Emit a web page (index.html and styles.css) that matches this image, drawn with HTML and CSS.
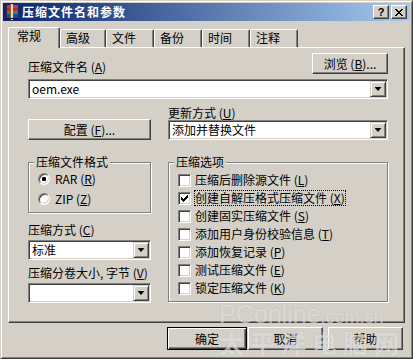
FILE: index.html
```html
<!DOCTYPE html>
<html lang="zh-CN">

<head>
    <meta charset="utf-8">
    <title>压缩文件名和参数</title>
    <link rel="stylesheet" href="styles.css">
</head>

<body>

    <div class="dialog">
        <!-- caption -->
        <div class="titlebar">
            <svg class="app-icon" viewBox="0 0 16 16" shape-rendering="crispEdges">
                <rect x="1" y="1" width="13" height="3" fill="#9c3c9c"/>
                <rect x="1" y="4" width="13" height="3" fill="#d42020"/>
                <rect x="1" y="7" width="13" height="3" fill="#209c3c"/>
                <rect x="1" y="10" width="13" height="4" fill="#2040c8"/>
                <rect x="1" y="1" width="2" height="13" fill="#402040"/>
                <rect x="6" y="0" width="3" height="16" fill="#e8d8a0"/>
                <rect x="6" y="0" width="1" height="16" fill="#806030"/>
                <rect x="1" y="14" width="13" height="1" fill="#101030"/>
            </svg>
            <span class="title">压缩文件名和参数</span>
            <button class="cap-btn">?</button>
            <button class="cap-btn">
                <svg width="8" height="7" viewBox="0 0 8 7" shape-rendering="crispEdges">
                    <path d="M0 0h2v1h1v1h2v-1h1v-1h2v1h-1v1h-1v1h-1v1h1v1h1v1h1v1h-2v-1h-1v-1h-2v1h-1v1h-2v-1h1v-1h1v-1h1v-1h-1v-1h-1v-1h-1z" fill="#000"/>
                </svg>
            </button>
        </div>

        <!-- tabs -->
        <div class="tabs">
            <div class="tab active">常规</div>
            <div class="tab">高级</div>
            <div class="tab">文件</div>
            <div class="tab">备份</div>
            <div class="tab">时间</div>
            <div class="tab">注释</div>
        </div>

        <div class="panel">
            <div class="name-row">
                <label>压缩文件名 (<u>A</u>)</label>
                <button class="btn browse">浏览 (<u>B</u>)...</button>
            </div>
            <div class="combo name-combo">
                <span class="value">oem.exe</span>
                <span class="drop"></span>
            </div>

            <div class="columns">
                <button class="btn profile">配置 (<u>F</u>)...</button>

                <div class="update">
                    <label>更新方式 (<u>U</u>)</label>
                    <div class="combo">
                        <span class="value">添加并替换文件</span>
                        <span class="drop"></span>
                    </div>
                </div>

                <div class="left-col">
                    <fieldset class="group format">
                        <legend>压缩文件格式</legend>
                        <div class="radio"><span class="radio-mark checked"></span>RAR (<u>R</u>)</div>
                        <div class="radio"><span class="radio-mark"></span>ZIP (<u>Z</u>)</div>
                    </fieldset>

                    <label class="field-label">压缩方式 (<u>C</u>)</label>
                    <div class="combo">
                        <span class="value">标准</span>
                        <span class="drop"></span>
                    </div>

                    <label class="field-label volume">压缩分卷大小, 字节 (<u>V</u>)</label>
                    <div class="combo">
                        <span class="value"></span>
                        <span class="drop"></span>
                    </div>
                </div>

                <fieldset class="group options">
                    <legend>压缩选项</legend>
                    <div class="check"><span class="box"></span><span class="text">压缩后删除源文件 (<u>L</u>)</span></div>
                    <div class="check"><span class="box checked"><svg width="13" height="13" viewBox="0 0 13 13" shape-rendering="crispEdges"><path d="M3 5H4V6H5V7H6V6H7V5H8V4H9V3H10V6H9V7H8V8H7V9H6V10H5V9H4V8H3Z" fill="#000"/></svg></span><span class="text focus">创建自解压格式压缩文件 (<u>X</u>)</span></div>
                    <div class="check"><span class="box"></span><span class="text">创建固实压缩文件 (<u>S</u>)</span></div>
                    <div class="check"><span class="box"></span><span class="text">添加用户身份校验信息 (<u>T</u>)</span></div>
                    <div class="check"><span class="box"></span><span class="text">添加恢复记录 (<u>P</u>)</span></div>
                    <div class="check"><span class="box"></span><span class="text">测试压缩文件 (<u>E</u>)</span></div>
                    <div class="check"><span class="box"></span><span class="text">锁定压缩文件 (<u>K</u>)</span></div>
                </fieldset>
            </div>
        </div>

        <div class="actions">
            <button class="btn default">确定</button>
            <button class="btn">取消</button>
            <button class="btn">帮助</button>
        </div>

        <!-- site watermark over the picture -->
        <div class="watermark">
            <div class="wm-en">PConline<small>.com.cn</small></div>
            <div class="wm-cn">太平洋电脑网</div>
        </div>
    </div>

</body>

</html>
```

FILE: styles.css
```css
* {
    margin: 0;
    padding: 0;
    box-sizing: border-box;
}

body {
    width: 413px;
    height: 359px;
    overflow: hidden;
    background: #d4d0c8;
    font-family: "Noto Sans CJK SC", "Noto Sans", sans-serif;
    font-size: 12px;
    line-height: 14px;
    color: #000;
}

u {
    text-underline-offset: 1px;
}

/** Window frame **/
.dialog {
    position: relative;
    width: 413px;
    height: 359px;
    padding: 2px;
    background: #d4d0c8;
    border: 1px solid;
    border-color: #d4d0c8 #404040 #404040 #d4d0c8;
    box-shadow: inset 1px 1px #fff, inset -1px -1px #808080;
}

.titlebar {
    display: flex;
    align-items: center;
    height: 18px;
    padding: 0 3px 0 1px;
    background: linear-gradient(to right, #0a246a, #a6caf0);
    color: #fff;
}

.app-icon {
    flex: none;
    width: 16px;
    height: 16px;
    margin-right: 2px;
}

.title {
    flex: 1;
    font-weight: 700;
    letter-spacing: 1px;
}

.cap-btn {
    display: flex;
    align-items: center;
    justify-content: center;
    width: 16px;
    height: 14px;
    background: #d4d0c8;
    border: 1px solid;
    border-color: #fff #404040 #404040 #fff;
    box-shadow: inset -1px -1px #808080;
    font-family: "Liberation Sans", sans-serif;
    font-size: 11px;
    font-weight: 700;
    line-height: 12px;
    color: #000;
}

.cap-btn + .cap-btn {
    margin-left: 2px;
}

/** Tab strip **/
.tabs {
    display: flex;
    align-items: flex-end;
    height: 20px;
    margin-top: 6px;
    padding-left: 5px;
}

.tab {
    width: 48px;
    height: 18px;
    padding: 1px 0 0 5px;
    border-style: solid;
    border-width: 1px 1px 0 1px;
    border-color: #fff #404040 #404040 #fff;
    border-radius: 2px 2px 0 0;
    box-shadow: inset -1px 0 #808080;
}

.tab.active {
    position: relative;
    z-index: 1;
    width: 52px;
    height: 21px;
    margin-bottom: -1px;
    padding-left: 8px;
    background: #d4d0c8;
}

.tab.active + .tab {
    width: 46px;
}

.panel {
    height: 276px;
    margin: 0 5px;
    padding: 5px 16px 0 19px;
    border: 1px solid;
    border-color: #fff #404040 #404040 #fff;
    box-shadow: inset -1px -1px #808080;
}

/** Controls **/
.btn {
    font: inherit;
    color: #000;
    background: #d4d0c8;
    border: 1px solid;
    border-color: #fff #404040 #404040 #fff;
    box-shadow: inset -1px -1px #808080;
}

.name-row {
    display: flex;
    justify-content: space-between;
    align-items: flex-end;
}

.browse {
    width: 76px;
    height: 21px;
}

.combo {
    display: flex;
    height: 20px;
    padding: 1px;
    background: #fff;
    border: 1px solid;
    border-color: #808080 #fff #fff #808080;
    box-shadow: inset 1px 1px #404040, inset -1px -1px #d4d0c8;
}

.combo .value {
    flex: 1;
    padding-left: 2px;
    line-height: 16px;
    white-space: nowrap;
}

.name-combo {
    margin-top: 5px;
}

.drop {
    display: flex;
    align-items: center;
    justify-content: center;
    width: 16px;
    height: 16px;
    background: #d4d0c8;
    border: 1px solid;
    border-color: #d4d0c8 #404040 #404040 #d4d0c8;
    box-shadow: inset 1px 1px #fff, inset -1px -1px #808080;
}

.drop::after {
    content: "";
    width: 7px;
    height: 4px;
    background: #000;
    clip-path: polygon(0 0, 100% 0, 50% 100%);
}

.columns {
    display: grid;
    grid-template-columns: 123px 220px;
    column-gap: 17px;
    align-items: start;
}

.profile {
    height: 21px;
    margin-top: 20px;
}

.update {
    display: flex;
    flex-direction: column;
    margin-top: 7px;
}

.left-col {
    display: flex;
    flex-direction: column;
}

.field-label {
    margin-top: 10px;
    margin-bottom: 3px;
}

.field-label.volume {
    margin-top: 6px;
}

/** Group boxes **/
.group {
    margin-top: 15px;
    padding: 0 6px 3px 9px;
    border: 1px solid #808080;
    box-shadow: 1px 1px #fff, inset 1px 1px #fff;
}

.group legend {
    margin-left: -4px;
    padding: 0 2px;
    background: #d4d0c8;
}

.options {
    padding-top: 2px;
    padding-bottom: 4px;
}

.radio {
    display: flex;
    align-items: center;
    height: 20px;
}

.radio-mark {
    position: relative;
    width: 12px;
    height: 12px;
    margin-right: 5px;
    background: #fff;
    border-radius: 50%;
    border: 1px solid;
    border-color: #808080 #fff #fff #808080;
    box-shadow: inset 1px 1px #404040, inset -1px -1px #d4d0c8;
}

.radio-mark.checked::after {
    content: "";
    position: absolute;
    left: 3px;
    top: 3px;
    width: 4px;
    height: 4px;
    border-radius: 1px;
    background: #000;
}

.check {
    display: flex;
    align-items: center;
    height: 18px;
}

.check .box {
    flex: none;
    width: 13px;
    height: 13px;
    margin-right: 3px;
    background: #fff;
    border: 1px solid;
    border-color: #808080 #fff #fff #808080;
    box-shadow: inset 1px 1px #404040, inset -1px -1px #d4d0c8;
}

.check .box svg {
    display: block;
    margin: -1px;
}

.check .text {
    padding: 1px;
    white-space: nowrap;
}

.check .text.focus {
    outline: 1px dotted #000;
    outline-offset: -1px;
}

/** Dialog buttons **/
.actions {
    display: flex;
    justify-content: flex-end;
    margin-top: 4px;
    padding-right: 7px;
}

.actions .btn {
    width: 75px;
    height: 23px;
    margin-left: 5px;
}

.actions .btn.default {
    width: 80px;
    border-color: #000;
    box-shadow: inset 1px 1px #fff, inset -1px -1px #404040, inset -2px -2px #808080;
}

.actions .btn.default + .btn {
    margin-left: 1px;
}

/** Watermark from the source site **/
.watermark {
    position: absolute;
    left: 218px;
    top: 301px;
    pointer-events: none;
    color: rgba(255, 255, 255, 0.5);
    text-shadow: 0 0 1px rgba(120, 120, 120, 0.35);
}

.wm-en {
    font-family: "Liberation Sans", sans-serif;
    font-size: 25px;
    line-height: 25px;
}

.wm-en small {
    font-size: 18px;
}

.wm-cn {
    font-size: 25px;
    line-height: 24px;
    letter-spacing: 6px;
    font-weight: 700;
}
```
